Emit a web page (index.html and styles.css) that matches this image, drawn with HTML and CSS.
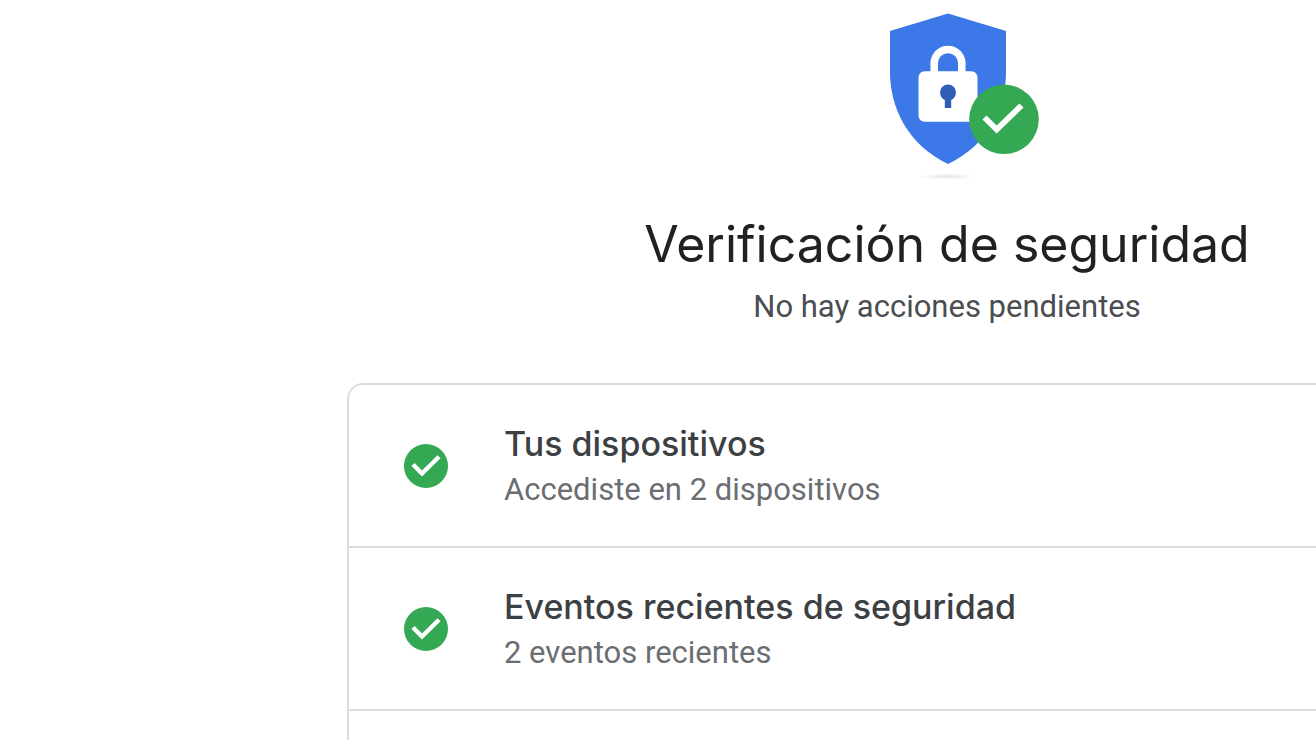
FILE: index.html
```html
<!DOCTYPE html>
<html lang="es">
<head>
    <meta charset="UTF-8">
    <meta name="viewport" content="width=device-width, initial-scale=1.0">
    <title>Verificación de seguridad</title>
    <link rel="stylesheet" href="styles.css">
</head>
<body>
    <main class="checkup">
        <header class="header">
            <svg class="shield" viewBox="0 0 192 192" aria-hidden="true">
                <defs>
                    <radialGradient id="shadow">
                        <stop offset="0" stop-color="#e4e4e4"/>
                        <stop offset="1" stop-color="#fff"/>
                    </radialGradient>
                </defs>
                <ellipse cx="95.5" cy="176.5" rx="28" ry="3" fill="url(#shadow)"/>
                <path d="M97 13.5 155 31V72C155 108 137 145 97 164 57 145 39 108 39 72V31Z" fill="#3c78e7"/>
                <path d="M83.2 73V63.2a13.8 13.8 0 0 1 27.6 0V73" fill="none" stroke="#fff" stroke-width="7.5"/>
                <rect x="67.5" y="71.3" width="59" height="50.5" rx="6" fill="#fff"/>
                <circle cx="97" cy="92.5" r="8" fill="#2f5db8"/>
                <path d="M93.8 96h6.4v12h-6.4z" fill="#2f5db8"/>
                <circle cx="153" cy="119.3" r="34.8" fill="#34a853"/>
                <path d="M133.5 117.5 145.7 129.5 170.5 105.5" fill="none" stroke="#fff" stroke-width="5.8"/>
            </svg>
            <h1 class="title">Verificación de seguridad</h1>
            <p class="subtitle">No hay acciones pendientes</p>
        </header>
        <ul class="card">
            <li class="row">
                <svg class="check" viewBox="0 0 44 44" aria-hidden="true">
                    <circle cx="22" cy="22" r="22" fill="#34a853"/>
                    <path d="M9 20.5 18 29.5 35 12.8" fill="none" stroke="#fff" stroke-width="4.4"/>
                </svg>
                <div class="row-text">
                    <h2 class="row-title">Tus dispositivos</h2>
                    <p class="row-detail">Accediste en 2 dispositivos</p>
                </div>
            </li>
            <li class="row">
                <svg class="check" viewBox="0 0 44 44" aria-hidden="true">
                    <circle cx="22" cy="22" r="22" fill="#34a853"/>
                    <path d="M9 20.5 18 29.5 35 12.8" fill="none" stroke="#fff" stroke-width="4.4"/>
                </svg>
                <div class="row-text">
                    <h2 class="row-title">Eventos recientes de seguridad</h2>
                    <p class="row-detail">2 eventos recientes</p>
                </div>
            </li>
        </ul>
    </main>
</body>
</html>
```
FILE: styles.css
```css
* {
    box-sizing: border-box;
}
body {
    margin: 0;
    font-family: Roboto, "Liberation Sans", sans-serif;
    font-size: 31px;
    color: #6a6e73;
    background-color: #fff;
}
h1, h2, p {
    margin: 0;
    font-weight: 400;
}
.checkup {
    display: flex;
    flex-direction: column;
    min-height: 100vh;
}
.header {
    display: flex;
    flex-direction: column;
    align-items: center;
    padding: 0 0 54px 578px;
}
.shield {
    width: 192px;
    height: 192px;
}
.title {
    margin-top: 16px;
    font-family: Inter, Roboto, sans-serif;
    font-size: 50px;
    line-height: 72px;
    white-space: nowrap;
    color: #202124;
}
.subtitle {
    margin-top: 5px;
    line-height: 44px;
    color: #4a4d51;
}
/* open on the right, the card runs up to the window edge */
.card {
    flex: 1;
    margin: 0 0 0 347px;
    padding: 0;
    list-style: none;
    border: 2px solid #dadce0;
    border-right: none;
    border-bottom: none;
    border-top-left-radius: 16px;
}
.row {
    display: flex;
    align-items: center;
    gap: 56px;
    height: 163px;
    padding: 0 55px;
    border-bottom: 2px solid #dadce0;
}
.check {
    width: 44px;
    height: 44px;
}
.row-title {
    font-family: Inter, Roboto, sans-serif;
    font-size: 34px;
    font-weight: 500;
    line-height: 48px;
    color: #3c4043;
}
.row-detail {
    line-height: 44px;
}
```
